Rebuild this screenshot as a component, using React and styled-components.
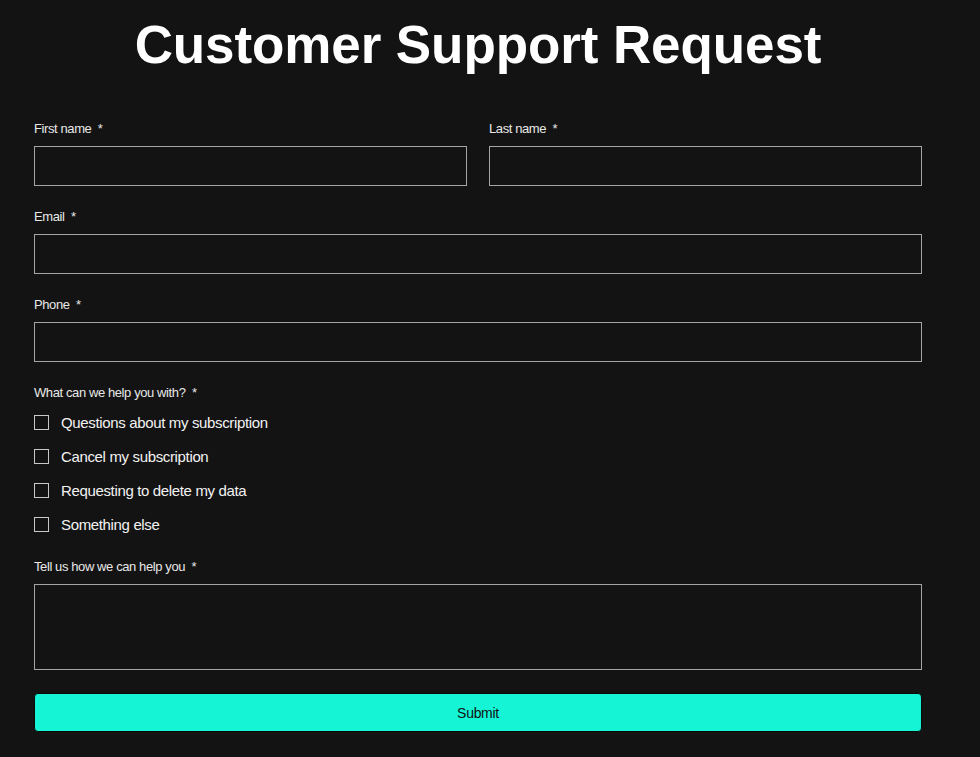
import React from "react";
import styled, { createGlobalStyle } from "styled-components";

const Global = createGlobalStyle`
  html, body { margin: 0; padding: 0; background: #131313; }
  body { font-family: "Liberation Sans", Arial, sans-serif; color: #f2f2f2; }
  * { box-sizing: border-box; }
`;

const Page = styled.div`
  width: 980px;
  min-height: 757px;
  background: #131313;
  padding: 15px 58px 0 34px;
`;

const Title = styled.h1`
  margin: 0 0 46px;
  height: 60px;
  line-height: 60px;
  font-size: 53px;
  font-weight: 700;
  letter-spacing: -0.1px;
  text-align: center;
  color: #ffffff;
`;

const Form = styled.form`
  display: flex;
  flex-direction: column;
  gap: 23px;
`;

const Row = styled.div`
  display: grid;
  grid-template-columns: 1fr 1fr;
  gap: 22px;
`;

const Field = styled.div`
  display: flex;
  flex-direction: column;
`;

const Label = styled.label`
  font-size: 13px;
  line-height: 16px;
  letter-spacing: -0.4px;
  color: #e8e8e8;
  margin-bottom: 9px;
  white-space: pre;
`;

const Input = styled.input`
  height: 40px;
  width: 100%;
  background: transparent;
  border: 1px solid #a4a4a4;
  border-radius: 0;
  outline: none;
  color: #fff;
  font: inherit;
`;

const TextArea = styled.textarea`
  height: 86px;
  width: 100%;
  background: transparent;
  border: 1px solid #a4a4a4;
  border-radius: 0;
  outline: none;
  resize: none;
  display: block;
  color: #fff;
  font: inherit;
`;

const Options = styled.div`
  display: flex;
  flex-direction: column;
  gap: 14px;
  margin-top: 2px;
  margin-bottom: 2px;
`;

const Option = styled.label`
  display: flex;
  align-items: center;
  gap: 12px;
  height: 20px;
  font-size: 15px;
  letter-spacing: -0.35px;
  color: #f2f2f2;
  cursor: pointer;
`;

const Box = styled.span`
  width: 15px;
  height: 15px;
  border: 1px solid #c8c8c8;
  flex: none;
`;

const Submit = styled.button`
  height: 39px;
  width: 100%;
  background: #15f5d6;
  border: 1px solid #0a0a0a;
  border-radius: 4px;
  color: #111;
  font-family: "Liberation Sans", Arial, sans-serif;
  font-size: 14px;
  letter-spacing: -0.3px;
  cursor: pointer;
`;

const options = [
  "Questions about my subscription",
  "Cancel my subscription",
  "Requesting to delete my data",
  "Something else",
];

export default function App() {
  return (
    <>
      <Global />
      <Page>
        <Title>Customer Support Request</Title>
        <Form onSubmit={(e) => e.preventDefault()}>
          <Row>
            <Field>
              <Label>First name  *</Label>
              <Input />
            </Field>
            <Field>
              <Label>Last name  *</Label>
              <Input />
            </Field>
          </Row>
          <Field>
            <Label>Email  *</Label>
            <Input />
          </Field>
          <Field>
            <Label>Phone  *</Label>
            <Input />
          </Field>
          <Field>
            <Label>What can we help you with?  *</Label>
            <Options>
              {options.map((o) => (
                <Option key={o}>
                  <Box />
                  {o}
                </Option>
              ))}
            </Options>
          </Field>
          <Field>
            <Label>Tell us how we can help you  *</Label>
            <TextArea />
          </Field>
          <Submit type="submit">Submit</Submit>
        </Form>
      </Page>
    </>
  );
}
